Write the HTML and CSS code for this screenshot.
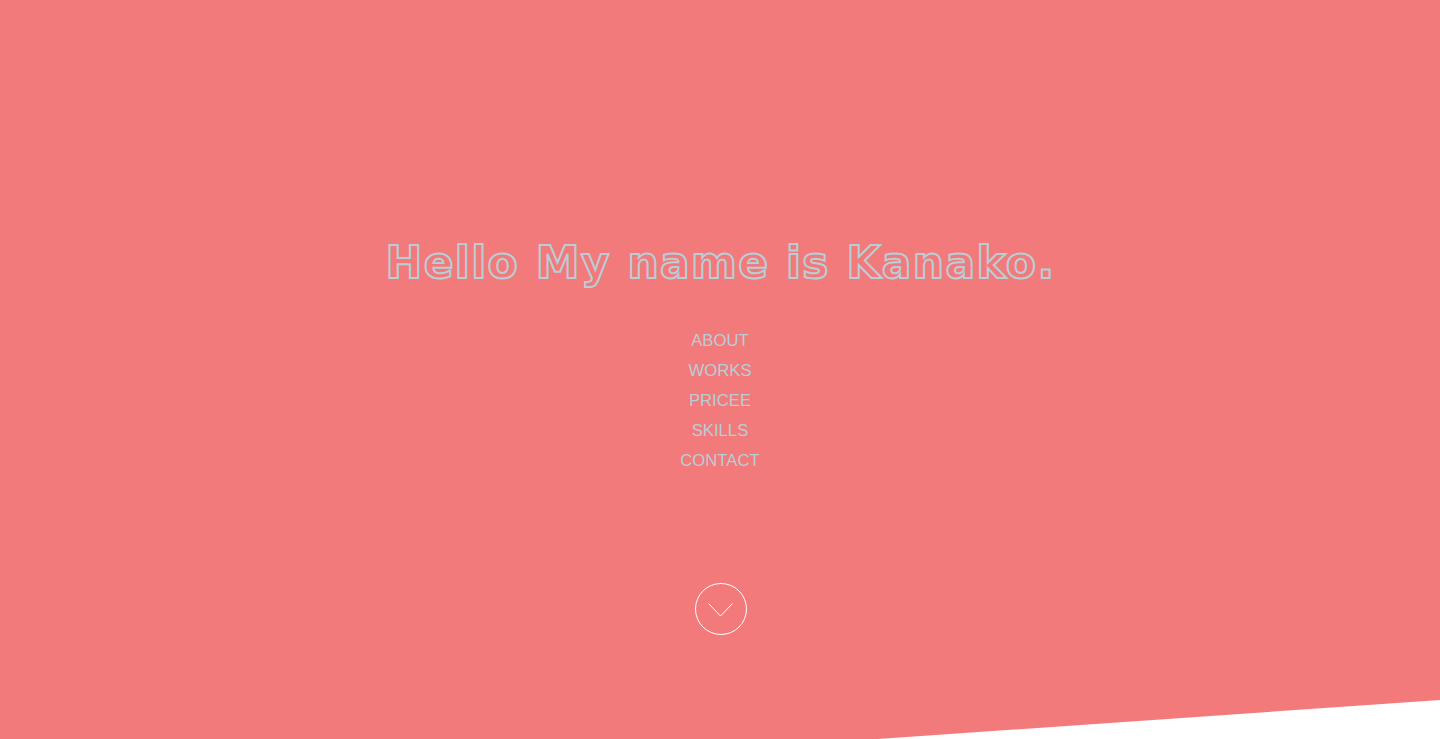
FILE: index.html
```html
<!DOCTYPE html>
<html lang="en">
<head>
<meta charset="utf-8">
<title>Kanako</title>
<link rel="stylesheet" href="styles.css">
</head>
<body>
<section class="hero">
  <h1 class="hero-title">Hello My name is Kanako.</h1>
  <nav class="hero-nav">
    <a href="#about">ABOUT</a>
    <a href="#works">WORKS</a>
    <a href="#price">PRICEE</a>
    <a href="#skills">SKILLS</a>
    <a href="#contact">CONTACT</a>
  </nav>
  <a class="scroll-btn" href="#about" aria-label="scroll down">
    <svg width="54" height="54" viewBox="0 0 54 54">
      <circle cx="27" cy="27" r="25.5" fill="none" stroke="#ffffff" stroke-width="1"/>
      <polyline points="14.5,21.5 26.5,34 38.5,21.5" fill="none" stroke="#ffffff" stroke-width="1"/>
    </svg>
  </a>
</section>
</body>
</html>
```
FILE: styles.css
```css
html, body {
  margin: 0;
  padding: 0;
  background: #ffffff;
}
body {
  font-family: "Liberation Sans", Arial, sans-serif;
  overflow: hidden;
}
.hero {
  height: 739px;
  background: #f27a7a;
  display: flex;
  flex-direction: column;
  align-items: center;
  padding-top: 233px;
  box-sizing: border-box;
  clip-path: polygon(0 0, 100% 0, 100% 700px, 878px 739px, 0 739px);
}
.hero-title {
  margin: 0 0 0 1px;
  font-family: "DejaVu Sans", Verdana, sans-serif;
  font-size: 44px;
  line-height: 60px;
  font-weight: 700;
  letter-spacing: 1.3px;
  color: transparent;
  -webkit-text-stroke: 2px #b9cdd6;
}
.hero-nav {
  margin-top: 33px;
  display: flex;
  flex-direction: column;
  align-items: center;
}
.hero-nav a {
  font-size: 16.7px;
  line-height: 30px;
  color: #b9cdd6;
  text-decoration: none;
}
.scroll-btn {
  margin-top: 106px;
  margin-left: 2px;
  display: block;
  width: 54px;
  height: 54px;
}
.scroll-btn svg {
  display: block;
}
```
